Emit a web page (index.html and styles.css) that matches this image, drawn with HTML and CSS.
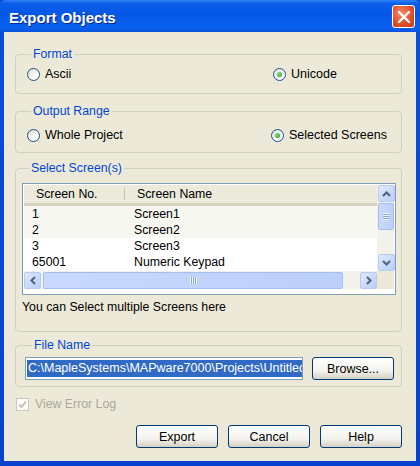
FILE: index.html
```html
<!DOCTYPE html>
<html lang="en">
<head>
    <meta charset="UTF-8">
    <meta name="viewport" content="width=device-width, initial-scale=1.0">
    <title>Export Objects</title>
    <link rel="stylesheet" href="styles.css">
</head>
<body>
    <div class="window">
        <div class="titlebar">
            <span class="title">Export Objects</span>
            <div class="close">
                <svg width="14" height="14" viewBox="0 0 14 14"><path d="M2 2 L12 12 M12 2 L2 12" stroke="#fff" stroke-width="2.4" stroke-linecap="round"/></svg>
            </div>
        </div>

        <div class="dialog">
            <fieldset class="group group-format">
                <legend>Format</legend>
                <div class="radio-row">
                    <label class="radio"><span class="dot"></span>Ascii</label>
                    <label class="radio checked"><span class="dot"></span>Unicode</label>
                </div>
            </fieldset>

            <fieldset class="group group-range">
                <legend>Output Range</legend>
                <div class="radio-row">
                    <label class="radio"><span class="dot"></span>Whole Project</label>
                    <label class="radio checked"><span class="dot"></span>Selected Screens</label>
                </div>
            </fieldset>

            <fieldset class="group group-screens">
                <legend>Select Screen(s)</legend>
                <div class="listview">
                    <div class="list-main">
                        <div class="list-header">
                            <div class="col col-no">Screen No.</div>
                            <div class="col col-name">Screen Name</div>
                        </div>
                        <div class="list-row shade"><div class="col col-no">1</div><div class="col col-name">Screen1</div></div>
                        <div class="list-row shade"><div class="col col-no">2</div><div class="col col-name">Screen2</div></div>
                        <div class="list-row"><div class="col col-no">3</div><div class="col col-name">Screen3</div></div>
                        <div class="list-row"><div class="col col-no">65001</div><div class="col col-name">Numeric Keypad</div></div>
                    </div>
                    <div class="vscroll">
                        <div class="sb-btn">
                            <svg width="9" height="6" viewBox="0 0 9 6"><path d="M1 5 L4.5 1.5 L8 5" fill="none" stroke="#4d6185" stroke-width="2"/></svg>
                        </div>
                        <div class="sb-thumb v-thumb"><span class="grip"></span></div>
                        <div class="sb-space"></div>
                        <div class="sb-btn">
                            <svg width="9" height="6" viewBox="0 0 9 6"><path d="M1 1 L4.5 4.5 L8 1" fill="none" stroke="#4d6185" stroke-width="2"/></svg>
                        </div>
                    </div>
                    <div class="hscroll">
                        <div class="sb-btn">
                            <svg width="6" height="9" viewBox="0 0 6 9"><path d="M5 1 L1.5 4.5 L5 8" fill="none" stroke="#4d6185" stroke-width="2"/></svg>
                        </div>
                        <div class="sb-thumb h-thumb"><span class="grip"></span></div>
                        <div class="sb-space"></div>
                        <div class="sb-btn">
                            <svg width="6" height="9" viewBox="0 0 6 9"><path d="M1 1 L4.5 4.5 L1 8" fill="none" stroke="#4d6185" stroke-width="2"/></svg>
                        </div>
                    </div>
                    <div class="corner"></div>
                </div>
                <p class="hint">You can Select multiple Screens here</p>
            </fieldset>

            <fieldset class="group group-file">
                <legend>File Name</legend>
                <div class="file-row">
                    <div class="textbox"><span class="selected">C:\MapleSystems\MAPware7000\Projects\Untitled</span></div>
                    <button class="btn btn-browse">Browse...</button>
                </div>
            </fieldset>

            <label class="checkbox disabled">
                <span class="box">
                    <svg width="9" height="9" viewBox="0 0 9 9"><path d="M1 4.5 L3.5 7 L8 1.5" fill="none" stroke="#c7c5b2" stroke-width="2"/></svg>
                </span>
                View Error Log
            </label>

            <div class="buttons">
                <button class="btn">Export</button>
                <button class="btn">Cancel</button>
                <button class="btn">Help</button>
            </div>
        </div>
    </div>
</body>
</html>
```

FILE: styles.css
```css
body {
    margin: 0;
    font-family: "Liberation Sans", Arial, sans-serif;
    font-size: 12.3px;
    color: #000;
    background: #fff;
}
.window {
    width: 420px;
    height: 466px;
    display: flex;
    flex-direction: column;
    background: linear-gradient(#0a4fd9, #0842cf);
}
.titlebar {
    height: 32px;
    display: flex;
    align-items: center;
    justify-content: space-between;
    padding: 0 5px 0 9px;
    background: linear-gradient(#2f80f5 0%, #0a5ee8 12%, #0456e6 45%, #0a62f0 85%, #0852dd 100%);
    border-radius: 6px 6px 0 0;
}
.title {
    color: #fff;
    font-weight: bold;
    font-size: 15px;
    text-shadow: 1px 1px 0 #0a2a8a;
    margin-top: 2px;
}
.close {
    width: 21px;
    height: 21px;
    border: 1px solid #fff;
    border-radius: 3px;
    background: radial-gradient(circle at 40% 35%, #f08a6c, #de4d24 60%, #c8401b);
    display: flex;
    align-items: center;
    justify-content: center;
    margin-top: 1px;
}
.dialog {
    flex: 1;
    margin: 0 4px 5px 4px;
    background: #ece9d8;
    padding: 15px 14px 0 11px;
    display: flex;
    flex-direction: column;
}
.group {
    margin: 0;
    border: 1px solid #d0d0bf;
    border-radius: 4px;
    padding: 0 8px;
}
.group legend {
    color: #0046d5;
    padding: 0 2px;
    margin-left: 7px;
    line-height: 15px;
}
.group-format {
    padding-top: 4px;
    padding-bottom: 11px;
}
.group-range {
    margin-top: 10px;
    padding-top: 8px;
    padding-bottom: 9px;
}
.group-screens {
    margin-top: 8px;
    padding: 7px 5px 16px 6px;
}
.group-file {
    margin-top: 6px;
    padding: 4px 7px 6px 9px;
}
.radio-row {
    display: flex;
    justify-content: space-between;
    padding-left: 3px;
    padding-right: 10px;
}
.group-range .radio-row {
    padding-right: 1px;
}
.radio-row .radio:last-child {
    width: 110px;
}
.group-range .radio-row .radio:last-child {
    width: 121px;
}
.radio {
    display: flex;
    align-items: center;
    gap: 5px;
    height: 16px;
    font-size: 12.5px;
}
.dot {
    width: 11px;
    height: 11px;
    border: 1px solid #1c5180;
    border-radius: 50%;
    background: linear-gradient(135deg, #dcdcd3, #fff 70%);
    display: flex;
    align-items: center;
    justify-content: center;
}
.radio.checked .dot::after {
    content: "";
    width: 5px;
    height: 5px;
    border-radius: 50%;
    background: radial-gradient(circle at 35% 35%, #7ddd7d, #21a121);
}
.listview {
    height: 108px;
    border: 1px solid #7f9db9;
    padding: 1px;
    display: grid;
    grid-template-columns: 1fr 17px;
    grid-template-rows: 86px 18px;
    background: #fff;
}
.list-main {
    overflow: hidden;
}
.list-header {
    display: flex;
    height: 18px;
    background: #ebeadb;
    border-bottom: 3px solid #d6d2c2;
    align-items: center;
}
.list-header .col-no {
    width: 101px;
    padding-left: 12px;
    box-sizing: border-box;
    border-right: 1px solid #c7c5b2;
    height: 12px;
    line-height: 12px;
}
.list-header .col-name {
    padding-left: 12px;
}
.list-row {
    display: flex;
    height: 16px;
    line-height: 16px;
    white-space: nowrap;
}
.list-row.shade {
    background: #f7f7f2;
}
.list-row .col-no {
    width: 101px;
    padding-left: 8px;
    box-sizing: border-box;
}
.list-row .col-name {
    padding-left: 9px;
}
.vscroll {
    display: flex;
    flex-direction: column;
    background: #f3f1ec;
    padding: 0 0 0 1px;
}
.hscroll {
    display: flex;
    background: #f3f1ec;
    padding-top: 1px;
}
.corner {
    background: #ece9d8;
}
.sb-btn {
    width: 17px;
    height: 17px;
    box-sizing: border-box;
    border: 1px solid #b7cbf0;
    border-radius: 2px;
    background: linear-gradient(135deg, #dfe9ff, #bacdf8);
    display: flex;
    align-items: center;
    justify-content: center;
    flex: none;
}
.sb-thumb {
    box-sizing: border-box;
    border: 1px solid #a4bde9;
    border-radius: 2px;
    background: linear-gradient(90deg, #cad9fd, #bccffa);
    display: flex;
    align-items: center;
    justify-content: center;
}
.v-thumb {
    height: 27px;
    margin-top: 1px;
}
.h-thumb {
    width: 300px;
    margin-left: 2px;
}
.sb-space {
    flex: 1;
}
.grip {
    width: 7px;
    height: 7px;
    background: repeating-linear-gradient(#eef3ff 0 1px, #8ca7db 1px 2px);
}
.h-thumb .grip {
    background: repeating-linear-gradient(90deg, #eef3ff 0 1px, #8ca7db 1px 2px);
}
.hint {
    margin: 5px 0 0 0;
    line-height: 15px;
}
.file-row {
    display: flex;
    align-items: center;
    justify-content: space-between;
}
.textbox {
    width: 278px;
    height: 23px;
    box-sizing: border-box;
    border: 1px solid #7f9db9;
    background: #fff;
    padding: 2px 1px;
    overflow: hidden;
    white-space: nowrap;
    font-size: 12.5px;
}
.selected {
    display: inline-block;
    background: #316ac5;
    color: #fff;
    line-height: 17px;
    padding-left: 1px;
}
.btn {
    width: 82px;
    height: 23px;
    font-family: inherit;
    font-size: 12.5px;
    color: #000;
    border: 1px solid #003c74;
    border-radius: 3px;
    background: linear-gradient(#fff, #f4f3ee 60%, #d6d0c5);
    padding: 0;
}
.checkbox {
    display: flex;
    align-items: center;
    gap: 6px;
    margin-top: 9px;
    margin-left: 1px;
    height: 16px;
}
.checkbox.disabled {
    color: #aca899;
}
.box {
    width: 11px;
    height: 11px;
    border: 1px solid #cac8bb;
    background: #fff;
    display: flex;
    align-items: center;
    justify-content: center;
}
.buttons {
    display: flex;
    justify-content: flex-end;
    gap: 10px;
    margin-top: 13px;
}
```
